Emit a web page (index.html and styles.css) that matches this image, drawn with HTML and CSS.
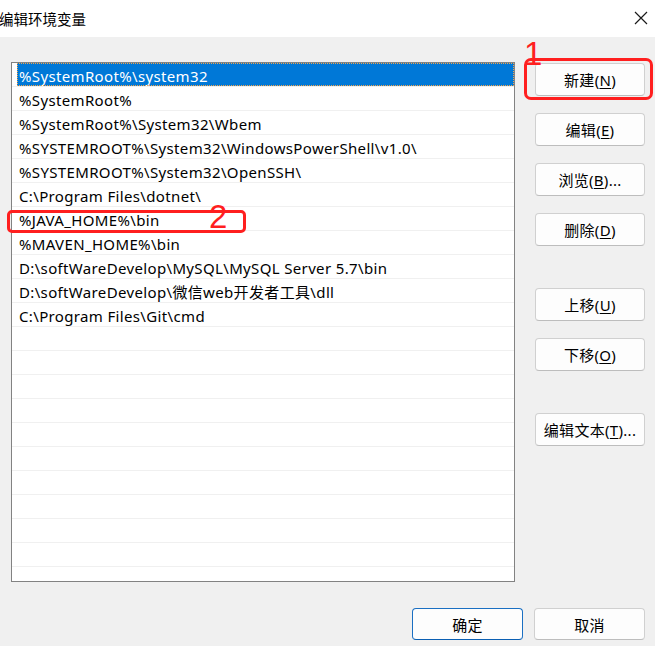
FILE: index.html
```html
<!DOCTYPE html>
<html>
<head>
<meta charset="utf-8">
<title>编辑环境变量</title>
<link rel="stylesheet" href="styles.css">
</head>
<body>
  <div class="titlebar">
    <span class="title">编辑环境变量</span>
    <svg class="close" width="14" height="14" viewBox="0 0 14 14">
      <path d="M1 1 L13 13 M13 1 L1 13" stroke="#1a1a1a" stroke-width="1.2" fill="none"/>
    </svg>
  </div>

  <div class="main">
    <div class="list">
      <div class="item selected"><span class="txt">%SystemRoot%\system32</span></div>
      <div class="item"><span class="txt">%SystemRoot%</span></div>
      <div class="item"><span class="txt">%SystemRoot%\System32\Wbem</span></div>
      <div class="item"><span class="txt">%SYSTEMROOT%\System32\WindowsPowerShell\v1.0\</span></div>
      <div class="item"><span class="txt">%SYSTEMROOT%\System32\OpenSSH\</span></div>
      <div class="item"><span class="txt">C:\Program Files\dotnet\</span></div>
      <div class="item"><span class="txt">%JAVA_HOME%\bin</span></div>
      <div class="item"><span class="txt">%MAVEN_HOME%\bin</span></div>
      <div class="item"><span class="txt">D:\softWareDevelop\MySQL\MySQL Server 5.7\bin</span></div>
      <div class="item"><span class="txt">D:\softWareDevelop\微信web开发者工具\dll</span></div>
      <div class="item"><span class="txt">C:\Program Files\Git\cmd</span></div>
      <div class="item"></div>
      <div class="item"></div>
      <div class="item"></div>
      <div class="item"></div>
      <div class="item"></div>
      <div class="item"></div>
      <div class="item"></div>
      <div class="item"></div>
      <div class="item"></div>
      <div class="item"></div>
      <div class="item"></div>
    </div>

    <div class="side">
      <button class="btn">新建(<u>N</u>)</button>
      <button class="btn">编辑(<u>E</u>)</button>
      <button class="btn">浏览(<u>B</u>)...</button>
      <button class="btn">删除(<u>D</u>)</button>
      <button class="btn far">上移(<u>U</u>)</button>
      <button class="btn">下移(<u>O</u>)</button>
      <button class="btn far">编辑文本(<u>T</u>)...</button>
    </div>
  </div>

  <div class="footer">
    <button class="btn default">确定</button>
    <button class="btn">取消</button>
  </div>

  <!-- 标注 -->
  <div class="mark box1"></div>
  <div class="mark-num num1">1</div>
  <div class="mark box2"></div>
  <div class="mark-num num2">2</div>
</body>
</html>
```

FILE: styles.css
```css
body {
    margin: 0;
    width: 655px;
    height: 646px;
    overflow: hidden;
    background: #f0f0f0;
    font-family: "Noto Sans", "Noto Sans CJK SC", sans-serif;
    font-size: 15px;
    color: #000;
}

.titlebar {
    height: 37px;
    background: #fff;
    display: flex;
    align-items: center;
    justify-content: space-between;
    padding: 0 7px 0 0;
}
.title {
    font-family: "Noto Sans CJK SC", sans-serif;
    font-size: 14.5px;
    margin-left: -1px;
}
.close { margin-top: -1px; }

.main {
    display: flex;
    padding: 25px 0 0 11px;
}

.list {
    width: 502px;
    height: 518px;
    border: 1px solid #828282;
    background: #fff;
    overflow: hidden;
}
.item {
    height: 23px;
    border-bottom: 1px solid #f0f0f0;
    padding-left: 5px;
}
.item .txt {
    display: block;
    height: 21px;
    padding-top: 2px;
    line-height: 23px;
    padding-left: 2px;
    letter-spacing: 0.35px;
    white-space: nowrap;
}
.item.selected .txt {
    background: #0078d7;
    color: #fff;
    outline: 1px dotted #f3a44a;
    outline-offset: -1px;
}

.side {
    display: flex;
    flex-direction: column;
    gap: 17px;
    margin-left: 20px;
    padding-top: 1px;
}
.side .far { margin-top: 25px; }

.btn {
    width: 110px;
    height: 33px;
    padding: 0;
    background: #fdfdfd;
    border: 1px solid #d0d0d0;
    border-bottom-color: #bdbdbd;
    border-radius: 4px;
    font-family: "Noto Sans", "Noto Sans CJK SC", sans-serif;
    font-size: 15px;
    letter-spacing: 0.3px;
    color: #000;
}
.btn u { text-underline-offset: 2px; }

.footer {
    display: flex;
    justify-content: flex-end;
    gap: 11px;
    padding: 26px 10px 0 0;
}
.footer .btn { width: 111px; height: 32px; }
.btn.default {
    border: 1px solid #1a6fc2;
    border-bottom-color: #0a5fb3;
}

.mark {
    position: absolute;
    border: 3px solid #ff1f1f;
    border-radius: 7px;
}
.box1 { left: 524px; top: 58px; width: 123px; height: 36px; }
.box2 { left: 7px; top: 210px; width: 233px; height: 17px; border-radius: 5px; }

.mark-num {
    position: absolute;
    color: #ff1f1f;
    font-family: "Liberation Sans", sans-serif;
    font-size: 33px;
    line-height: 1;
}
.num1 { left: 524px; top: 37px; }
.num2 { left: 209px; top: 200px; }
```
